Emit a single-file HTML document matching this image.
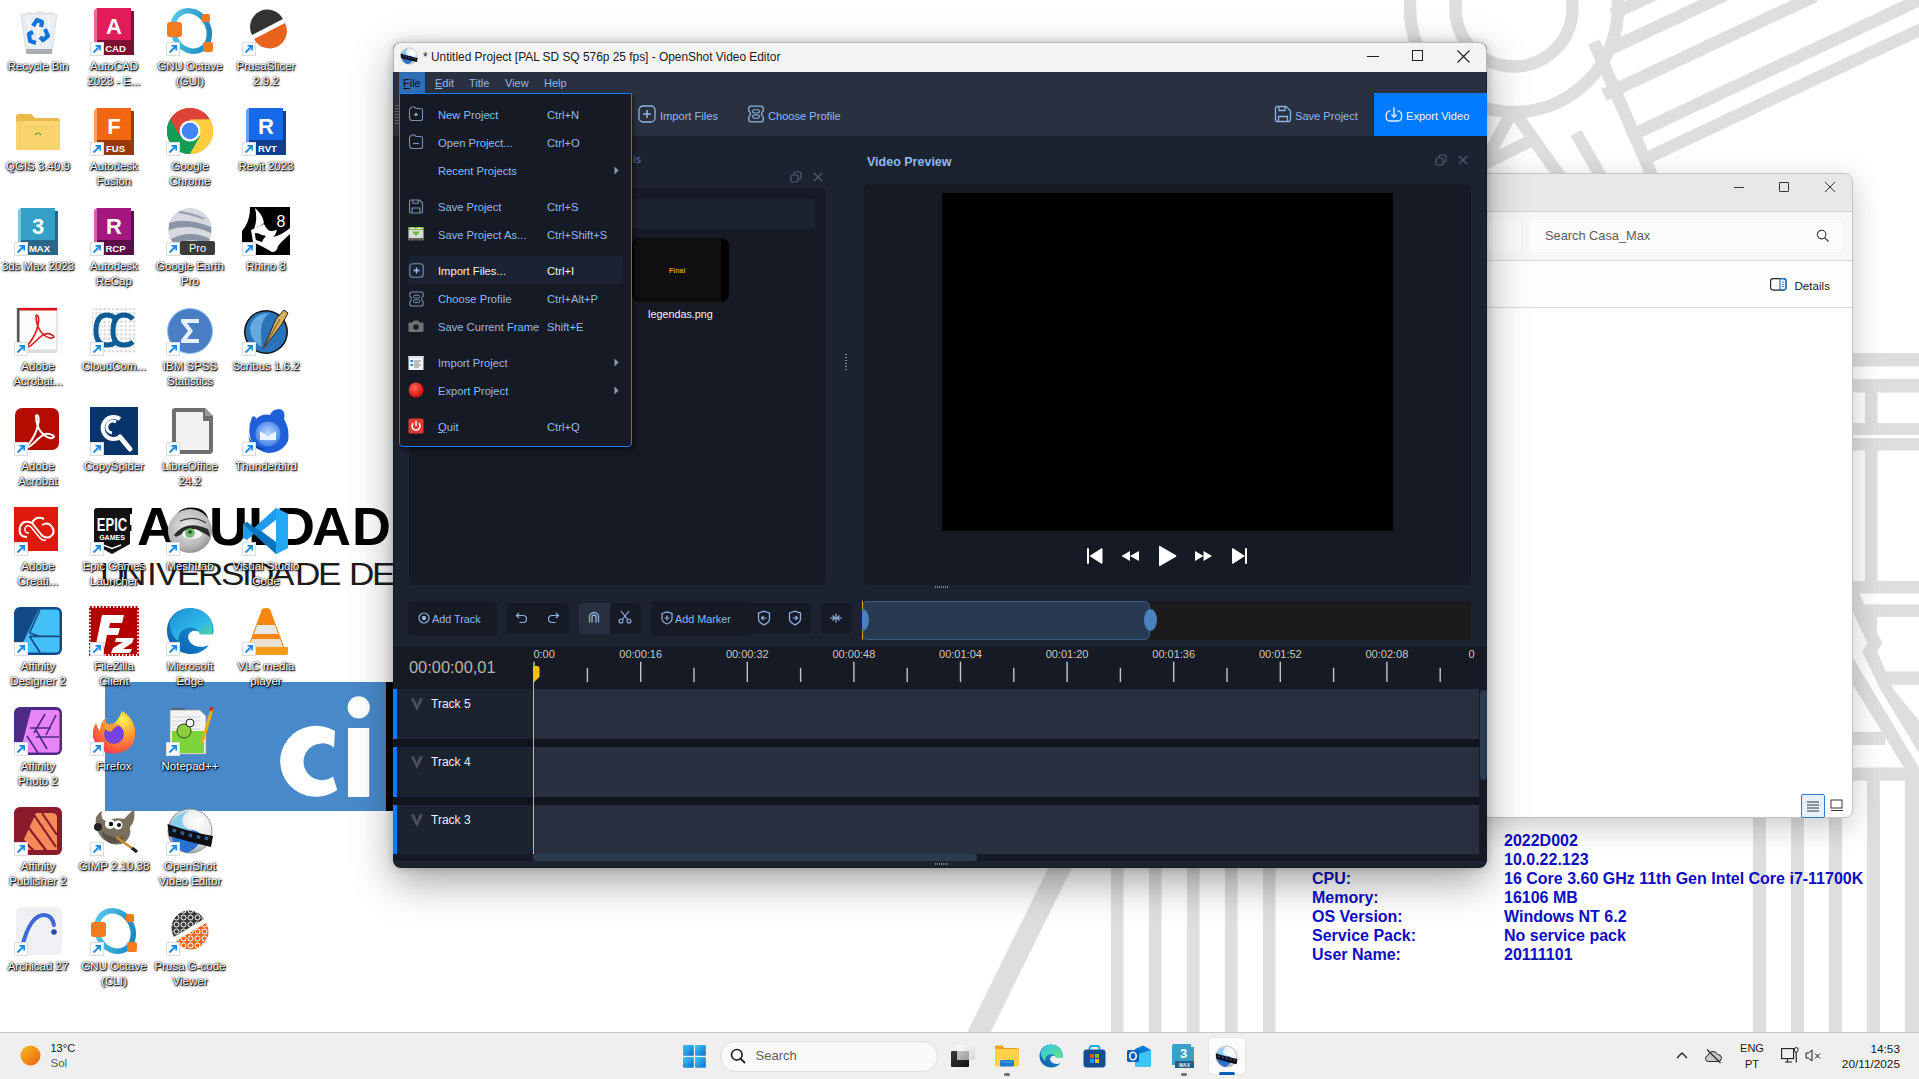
<!DOCTYPE html>
<html><head><meta charset="utf-8"><style>
*{box-sizing:border-box;margin:0;padding:0}
html,body{width:1919px;height:1079px;overflow:hidden;background:#fff;font-family:"Liberation Sans",sans-serif;position:relative}
.abs{position:absolute}
svg{overflow:visible}
.mtx{font-size:11px;line-height:14px;color:#8fb8ee;white-space:nowrap}
.tbt{font-size:11.1px;line-height:14px;color:#8fb8ee;white-space:nowrap}
.tbt2{font-size:10.8px;line-height:14px;color:#8fb8ee;white-space:nowrap}
.trh{left:397px;width:136px;height:50px;background:#1b2230}
.trc{left:533px;width:946px;height:50px;background:#283040}
.trb{left:393px;width:4px;height:50px;background:#0a7bff}
.trt{left:431px;font-size:12px;line-height:14px;color:#f0f0f0;white-space:nowrap}
.mt{left:438px;font-size:11.2px;line-height:14px;color:#8ebbf2;white-space:nowrap}
.mk{left:547px;font-size:11.2px;line-height:14px;color:#8ebbf2;white-space:nowrap}
.dl{width:80px;text-align:center;color:#fff;font-size:11.5px;line-height:15px;text-shadow:1px 1px 1px #000,0 0 2px #000,0 1px 3px rgba(0,0,0,.8)}
.bgi{font-size:16px;line-height:19px;font-weight:bold;color:#0c0cc4;white-space:nowrap}
.lb{top:496px;font-size:54px;line-height:60px;font-weight:bold;color:#000}
.lr{top:554.3px;font-size:32px;line-height:40px;color:#1c1c1c;transform:scaleX(1.1);transform-origin:0 0}

</style></head><body>
<svg class="abs" style="left:0;top:0" width="1919" height="1079">
<g fill="none" stroke="#dedede" stroke-width="12.5">
  <circle cx="1514" cy="8" r="58.5"/>
  <circle cx="1514" cy="8" r="104"/>
  <path d="M1612 14.3L1660 -8.3"/>
  <path d="M1612 48L1730 -7.4"/>
  <path d="M1604 95L1815 -4"/>
  <path d="M1628 136.8L1925 -2.8"/>
  <path d="M1643 159.8L1925 27.3"/>
  <path d="M1594 42L1656 185"/>
  <path d="M1576 133L1604 182"/>
  <path d="M1513 110L1478 175M1513 110L1566 185M1480 166L1536 138"/>
  <path d="M1064 860L977 1036" stroke-width="21"/>
</g>
<g fill="#dedede">
  <rect x="1111" y="868" width="12.5" height="164"/>
  <rect x="1149" y="868" width="12.5" height="164"/>
  <rect x="1187" y="868" width="12.5" height="164"/>
  <rect x="1225" y="868" width="12.5" height="164"/>
  <rect x="1263" y="868" width="12.5" height="164"/>
  <rect x="1753" y="818" width="13" height="214"/>
  <rect x="1791" y="818" width="13" height="214"/>
  <rect x="1829" y="818" width="13" height="214"/>
  <rect x="1867" y="780" width="13" height="252"/>
  <rect x="1905" y="780" width="14" height="252"/>
  <rect x="1853" y="353" width="66" height="13.5"/>
  <rect x="1853" y="379" width="66" height="13.5"/>
  <rect x="1865" y="392" width="12.5" height="32"/>
  <rect x="1853" y="423" width="66" height="12"/>
  <rect x="1853" y="438" width="66" height="12.5"/>
  <rect x="1865" y="450" width="12.5" height="132"/>
  <rect x="1853" y="581" width="66" height="12.5"/>
</g>
<g fill="#dedede">
  <rect x="1864" y="604.3" width="55" height="12.7"/>
  <rect x="1885" y="671.5" width="34" height="13.3"/>
  <rect x="1853" y="731.8" width="32" height="13.2"/>
  <rect x="1853" y="767.5" width="66" height="13.2"/>
  <path d="M1853 590L1859.7 594L1864 604L1877 617L1877 633L1882.6 643L1877 651.2L1893.8 690L1919 720.6L1919 753L1880.6 690L1862.2 651.2L1867.3 643L1853 612Z"/>
  <path d="M1853 657.8L1919 767.5L1919 792L1853 685Z"/>
</g>
</svg>
<!-- wallpaper logo -->
<div class="abs lb" style="left:101px">F</div><div class="abs lb" style="left:137px">A</div><div class="abs lb" style="left:171px">C</div><div class="abs lb" style="left:209px">U</div><div class="abs lb" style="left:248px">L</div><div class="abs lb" style="left:276px">D</div><div class="abs lb" style="left:312px">A</div><div class="abs lb" style="left:352px">D</div><div class="abs lb" style="left:391px">E</div>
<div class="abs lr" style="left:100px">U</div><div class="abs lr" style="left:121px">N</div><div class="abs lr" style="left:147px">I</div><div class="abs lr" style="left:156px">V</div><div class="abs lr" style="left:177.4px">E</div><div class="abs lr" style="left:198px">R</div><div class="abs lr" style="left:220.6px">S</div><div class="abs lr" style="left:242px">I</div><div class="abs lr" style="left:249px">D</div><div class="abs lr" style="left:271px">A</div><div class="abs lr" style="left:294.5px">D</div><div class="abs lr" style="left:318px">E</div><div class="abs lr" style="left:348.7px">D</div><div class="abs lr" style="left:371.6px">E</div>
<div class="abs" style="left:105px;top:682px;width:281px;height:129px;background:#4889c9"></div>
<div class="abs" style="left:385.5px;top:682px;width:7.5px;height:129px;background:#050505"></div>
<svg class="abs" style="left:0;top:0" width="400" height="820"><path d="M335 731A36 35.5 0 1 0 337.3 790L333 776.6A18.5 18.4 0 1 1 334 747.7Z" fill="#fff"/><rect x="348" y="728" width="21.2" height="69" fill="#fff"/><circle cx="358.7" cy="707.3" r="11.1" fill="#fff"/></svg>
<!-- BGInfo -->
<div class="abs bgi" style="left:1504px;top:830.5px">2022D002<br>10.0.22.123<br>16 Core 3.60 GHz 11th Gen Intel Core i7-11700K<br>16106 MB<br>Windows NT 6.2<br>No service pack<br>20111101</div>
<div class="abs bgi" style="left:1312px;top:868.5px">CPU:<br>Memory:<br>OS Version:<br>Service Pack:<br>User Name:</div>
<svg class="abs" style="left:14px;top:7px" width="48" height="48" viewBox="0 0 48 48"><path d="M7 7L12 44H38L43 7Z" fill="#e9eef2" stroke="#d0d6dc" stroke-width=".8"/><path d="M8 8Q14 3 20 6Q26 2 32 6Q38 3 42 8Z" fill="#dfe4e8"/><path d="M12 42H38V46Q38 47 37 47H13Q12 47 12 46Z" fill="#a9adb2"/><path d="M14 12L17 40M24 10V42M35 12L32 40" stroke="#fff" stroke-width="1.4" opacity=".9"/><path d="M19 19L23 13L28 15L27 20M31 22L34 29L29 33L26 30M22 36L16 34L15 27L19 25" fill="none" stroke="#1276d8" stroke-width="4.2" stroke-linejoin="round"/></svg>
<div class="abs dl" style="left:-2px;top:58.5px">Recycle Bin</div>
<svg class="abs" style="left:90px;top:7px" width="48" height="48" viewBox="0 0 48 48"><path d="M4 5Q4 2 7 1H38V48H4Z" fill="#e86c93"/><rect x="7" y="1" width="34" height="47" fill="#e01d5a"/><path d="M41 4H44V48H41Z" fill="#7d1230"/><rect x="7" y="33" width="37" height="15" fill="#7d1230"/><text x="24" y="27" font-size="22" font-weight="bold" fill="#fff" text-anchor="middle">A</text><text x="25.5" y="45" font-size="9.5" font-weight="bold" fill="#fff" text-anchor="middle">CAD</text><g transform="translate(0,35)"><rect x="0.5" y="0.5" width="13" height="13" fill="#fff" stroke="#d8dde4" stroke-width="1"/><path d="M3.5 10.5L10 4M5.5 3.8H10.2V8.5" fill="none" stroke="#1e88e5" stroke-width="1.8"/></g></svg>
<div class="abs dl" style="left:74px;top:58.5px">AutoCAD<br>2023 - E...</div>
<svg class="abs" style="left:166px;top:7px" width="48" height="48" viewBox="0 0 48 48"><defs><linearGradient id="octg" x1="0" y1="0" x2="1" y2="1"><stop offset="0" stop-color="#5fd0ee"/><stop offset="1" stop-color="#127fb8"/></linearGradient></defs><ellipse cx="25" cy="24" rx="17.5" ry="21" transform="rotate(-28 25 24)" fill="none" stroke="url(#octg)" stroke-width="5.5"/><rect x="1" y="15" width="15" height="15" rx="3" fill="#f47b20"/><rect x="36" y="7" width="8" height="8" rx="1.5" fill="#f47b20"/><rect x="37" y="35" width="10" height="10" rx="2" fill="#f47b20"/><g transform="translate(0,35)"><rect x="0.5" y="0.5" width="13" height="13" fill="#fff" stroke="#d8dde4" stroke-width="1"/><path d="M3.5 10.5L10 4M5.5 3.8H10.2V8.5" fill="none" stroke="#1e88e5" stroke-width="1.8"/></g></svg>
<div class="abs dl" style="left:150px;top:58.5px">GNU Octave<br>(GUI)</div>
<svg class="abs" style="left:242px;top:7px" width="48" height="48" viewBox="0 0 48 48"><path d="M10 28A16 16 0 0 1 41 12Z" fill="#333"/><path d="M12 32L43 16A16 16 0 0 1 12 32Z" fill="#e8641e"/><g transform="translate(0,35)"><rect x="0.5" y="0.5" width="13" height="13" fill="#fff" stroke="#d8dde4" stroke-width="1"/><path d="M3.5 10.5L10 4M5.5 3.8H10.2V8.5" fill="none" stroke="#1e88e5" stroke-width="1.8"/></g></svg>
<div class="abs dl" style="left:226px;top:58.5px">PrusaSlicer<br>2.9.2</div>
<svg class="abs" style="left:14px;top:107px" width="48" height="48" viewBox="0 0 48 48"><path d="M2 10Q2 7 5 7H17L21 11H43Q46 11 46 14V40Q46 43 43 43H5Q2 43 2 40Z" fill="#e9b949"/><rect x="2" y="14" width="44" height="29" rx="2.5" fill="#fad56b"/><path d="M6 14V43M10 20H40" stroke="#e0c070" stroke-width=".6"/><path d="M21 28q3-4 6 0" fill="none" stroke="#5a9a4a" stroke-width="1.2"/></svg>
<div class="abs dl" style="left:-2px;top:158.5px">QGIS 3.40.9</div>
<svg class="abs" style="left:90px;top:107px" width="48" height="48" viewBox="0 0 48 48"><path d="M4 5Q4 2 7 1H38V48H4Z" fill="#f9a060"/><rect x="7" y="1" width="34" height="47" fill="#f26711"/><path d="M41 4H44V48H41Z" fill="#9a3a0a"/><rect x="7" y="33" width="37" height="15" fill="#9a3a0a"/><text x="24" y="27" font-size="22" font-weight="bold" fill="#fff" text-anchor="middle">F</text><text x="25.5" y="45" font-size="9.5" font-weight="bold" fill="#fff" text-anchor="middle">FUS</text><g transform="translate(0,35)"><rect x="0.5" y="0.5" width="13" height="13" fill="#fff" stroke="#d8dde4" stroke-width="1"/><path d="M3.5 10.5L10 4M5.5 3.8H10.2V8.5" fill="none" stroke="#1e88e5" stroke-width="1.8"/></g></svg>
<div class="abs dl" style="left:74px;top:158.5px">Autodesk<br>Fusion</div>
<svg class="abs" style="left:166px;top:107px" width="48" height="48" viewBox="0 0 48 48"><circle cx="24" cy="24" r="23" fill="#db4437"/><path d="M24 24L4.1 12.5A23 23 0 0 0 24 47Z" fill="#0f9d58"/><path d="M24 24L24 47A23 23 0 0 0 43.9 12.5L24 12.5Z" fill="#ffcd40"/><path d="M24 12.5H43.9A23 23 0 0 0 4.1 12.5L14 29.5Z" fill="#db4437"/><path d="M24 24L14 29.5L4.1 12.5A23 23 0 0 0 24 47L34 29.5Z" fill="#0f9d58"/><path d="M34 29.5L24 47A23 23 0 0 0 43.9 12.5H24Z" fill="#ffcd40"/><circle cx="24" cy="24" r="10.5" fill="#fff"/><circle cx="24" cy="24" r="8.3" fill="#4285f4"/><g transform="translate(0,35)"><rect x="0.5" y="0.5" width="13" height="13" fill="#fff" stroke="#d8dde4" stroke-width="1"/><path d="M3.5 10.5L10 4M5.5 3.8H10.2V8.5" fill="none" stroke="#1e88e5" stroke-width="1.8"/></g></svg>
<div class="abs dl" style="left:150px;top:158.5px">Google<br>Chrome</div>
<svg class="abs" style="left:242px;top:107px" width="48" height="48" viewBox="0 0 48 48"><path d="M4 5Q4 2 7 1H38V48H4Z" fill="#6aa0f0"/><rect x="7" y="1" width="34" height="47" fill="#1769e8"/><path d="M41 4H44V48H41Z" fill="#0f3f8f"/><rect x="7" y="33" width="37" height="15" fill="#0f3f8f"/><text x="24" y="27" font-size="22" font-weight="bold" fill="#fff" text-anchor="middle">R</text><text x="25.5" y="45" font-size="9.5" font-weight="bold" fill="#fff" text-anchor="middle">RVT</text><g transform="translate(0,35)"><rect x="0.5" y="0.5" width="13" height="13" fill="#fff" stroke="#d8dde4" stroke-width="1"/><path d="M3.5 10.5L10 4M5.5 3.8H10.2V8.5" fill="none" stroke="#1e88e5" stroke-width="1.8"/></g></svg>
<div class="abs dl" style="left:226px;top:158.5px">Revit 2023</div>
<svg class="abs" style="left:14px;top:207px" width="48" height="48" viewBox="0 0 48 48"><path d="M4 5Q4 2 7 1H38V48H4Z" fill="#7cc4e0"/><rect x="7" y="1" width="34" height="47" fill="#34a0c8"/><path d="M41 4H44V48H41Z" fill="#2a6688"/><rect x="7" y="33" width="37" height="15" fill="#2a6688"/><text x="24" y="27" font-size="22" font-weight="bold" fill="#fff" text-anchor="middle">3</text><text x="25.5" y="45" font-size="9.5" font-weight="bold" fill="#fff" text-anchor="middle">MAX</text><g transform="translate(0,35)"><rect x="0.5" y="0.5" width="13" height="13" fill="#fff" stroke="#d8dde4" stroke-width="1"/><path d="M3.5 10.5L10 4M5.5 3.8H10.2V8.5" fill="none" stroke="#1e88e5" stroke-width="1.8"/></g></svg>
<div class="abs dl" style="left:-2px;top:258.5px">3ds Max 2023</div>
<svg class="abs" style="left:90px;top:207px" width="48" height="48" viewBox="0 0 48 48"><path d="M4 5Q4 2 7 1H38V48H4Z" fill="#d060b0"/><rect x="7" y="1" width="34" height="47" fill="#a3177e"/><path d="M41 4H44V48H41Z" fill="#5c0e48"/><rect x="7" y="33" width="37" height="15" fill="#5c0e48"/><text x="24" y="27" font-size="22" font-weight="bold" fill="#fff" text-anchor="middle">R</text><text x="25.5" y="45" font-size="9.5" font-weight="bold" fill="#fff" text-anchor="middle">RCP</text><g transform="translate(0,35)"><rect x="0.5" y="0.5" width="13" height="13" fill="#fff" stroke="#d8dde4" stroke-width="1"/><path d="M3.5 10.5L10 4M5.5 3.8H10.2V8.5" fill="none" stroke="#1e88e5" stroke-width="1.8"/></g></svg>
<div class="abs dl" style="left:74px;top:258.5px">Autodesk<br>ReCap</div>
<svg class="abs" style="left:166px;top:207px" width="48" height="48" viewBox="0 0 48 48"><circle cx="24" cy="23" r="22" fill="#d8d9de"/><path d="M3 16Q20 10 45 20L45 26Q22 16 3 23Z" fill="#8a93a8"/><path d="M5 32Q25 22 44 32L42 37Q25 29 8 38Z" fill="#8a93a8"/><path d="M14 4Q30 6 40 12L36 12Q26 8 12 6Z" fill="#9aa2b4"/><rect x="14" y="34" width="35" height="14" rx="2" fill="#3b3b3b"/><text x="31.5" y="45" font-size="11" fill="#fff" text-anchor="middle">Pro</text><g transform="translate(0,35)"><rect x="0.5" y="0.5" width="13" height="13" fill="#fff" stroke="#d8dde4" stroke-width="1"/><path d="M3.5 10.5L10 4M5.5 3.8H10.2V8.5" fill="none" stroke="#1e88e5" stroke-width="1.8"/></g></svg>
<div class="abs dl" style="left:150px;top:258.5px">Google Earth<br>Pro</div>
<svg class="abs" style="left:242px;top:207px" width="48" height="48" viewBox="0 0 48 48"><rect x="0" y="0" width="48" height="48" fill="#000"/><path d="M0 0H8Q8 12 3 20L0 24Z" fill="#fff"/><path d="M13 1Q21 8 22 16L18 19L12 22Q16 12 13 1Z" fill="#fff"/><path d="M9 23L18 19L22 17Q26 25 30 24L35 23Q33 29 31 30Q40 28 48 21V27Q40 34 36 39Q35 45 30 45Q22 40 11 35Q10 29 9 23Z" fill="#fff"/><path d="M13 26Q17 26 20 28L24 29Q21 32 20 35L14 33Q13 30 13 26Z" fill="#000"/><path d="M0 24Q8 28 11 35L0 35Z" fill="#000"/><text x="39" y="20" font-size="16" fill="#fff" text-anchor="middle">8</text><g transform="translate(0,35)"><rect x="0.5" y="0.5" width="13" height="13" fill="#fff" stroke="#d8dde4" stroke-width="1"/><path d="M3.5 10.5L10 4M5.5 3.8H10.2V8.5" fill="none" stroke="#1e88e5" stroke-width="1.8"/></g></svg>
<div class="abs dl" style="left:226px;top:258.5px">Rhino 8</div>
<svg class="abs" style="left:14px;top:307px" width="48" height="48" viewBox="0 0 48 48"><rect x="3" y="1" width="40" height="42" fill="#fbfbfb" stroke="#d0d0d0"/><rect x="3" y="1" width="40" height="2.5" fill="#d11"/><rect x="3" y="1" width="2.5" height="42" fill="#555"/><path d="M22 8q4 0 2 10t-10 20q-2 2 0 2t10-8 14-4q4 2 0 3t-10-5-6-18" fill="none" stroke="#d42020" stroke-width="1.6"/><rect x="3" y="43" width="40" height="3" fill="#ddd"/><g transform="translate(0,35)"><rect x="0.5" y="0.5" width="13" height="13" fill="#fff" stroke="#d8dde4" stroke-width="1"/><path d="M3.5 10.5L10 4M5.5 3.8H10.2V8.5" fill="none" stroke="#1e88e5" stroke-width="1.8"/></g></svg>
<div class="abs dl" style="left:-2px;top:358.5px">Adobe<br>Acrobat...</div>
<svg class="abs" style="left:90px;top:307px" width="48" height="48" viewBox="0 0 48 48"><pattern id="dots" width="4.2" height="4.2" patternUnits="userSpaceOnUse"><circle cx="2.1" cy="2.1" r="1.3" fill="#d6d6d6"/></pattern><rect x="2" y="1" width="45" height="46" fill="url(#dots)"/><path d="M26 12Q22 8 17 8Q6 8 6 24Q6 38 17 38Q22 38 26 35" fill="none" stroke="#0c5d96" stroke-width="5"/><path d="M43 12Q39 8 34 8Q23 8 23 24Q23 38 34 38Q39 38 43 35" fill="none" stroke="#0c5d96" stroke-width="5"/><g transform="translate(0,35)"><rect x="0.5" y="0.5" width="13" height="13" fill="#fff" stroke="#d8dde4" stroke-width="1"/><path d="M3.5 10.5L10 4M5.5 3.8H10.2V8.5" fill="none" stroke="#1e88e5" stroke-width="1.8"/></g></svg>
<div class="abs dl" style="left:74px;top:358.5px">CloudCom...</div>
<svg class="abs" style="left:166px;top:307px" width="48" height="48" viewBox="0 0 48 48"><circle cx="24" cy="24" r="22.5" fill="#4a7ec4" stroke="#8ec0f0" stroke-width="1"/><path d="M15 12H33V16H21L27 24L21 32H33V36H15V33L22 24L15 15Z" fill="#e8f2ff"/><g transform="translate(0,35)"><rect x="0.5" y="0.5" width="13" height="13" fill="#fff" stroke="#d8dde4" stroke-width="1"/><path d="M3.5 10.5L10 4M5.5 3.8H10.2V8.5" fill="none" stroke="#1e88e5" stroke-width="1.8"/></g></svg>
<div class="abs dl" style="left:150px;top:358.5px">IBM SPSS<br>Statistics</div>
<svg class="abs" style="left:242px;top:307px" width="48" height="48" viewBox="0 0 48 48"><circle cx="24" cy="25" r="22" fill="#111"/><circle cx="24" cy="25" r="20.5" fill="#2b73b8"/><path d="M8 20Q12 6 28 6Q16 12 20 40Q8 34 8 20Z" fill="#7ec0f0" opacity=".7"/><path d="M21 42L34 12L42 3L46 6L40 17Z" fill="#d8b060" stroke="#222" stroke-width="1"/><path d="M21 42L38 12" stroke="#6a5020" stroke-width="1"/><g transform="translate(0,35)"><rect x="0.5" y="0.5" width="13" height="13" fill="#fff" stroke="#d8dde4" stroke-width="1"/><path d="M3.5 10.5L10 4M5.5 3.8H10.2V8.5" fill="none" stroke="#1e88e5" stroke-width="1.8"/></g></svg>
<div class="abs dl" style="left:226px;top:358.5px">Scribus 1.6.2</div>
<svg class="abs" style="left:14px;top:407px" width="48" height="48" viewBox="0 0 48 48"><rect x="1" y="1" width="44" height="42" rx="7" fill="#b30b00"/><path d="M22 8q4 0 2 10t-10 20q-2 2 0 2t10-8 14-4q4 2 0 3t-10-5-6-18" fill="none" stroke="#fff" stroke-width="2"/><g transform="translate(0,35)"><rect x="0.5" y="0.5" width="13" height="13" fill="#fff" stroke="#d8dde4" stroke-width="1"/><path d="M3.5 10.5L10 4M5.5 3.8H10.2V8.5" fill="none" stroke="#1e88e5" stroke-width="1.8"/></g></svg>
<div class="abs dl" style="left:-2px;top:458.5px">Adobe<br>Acrobat</div>
<svg class="abs" style="left:90px;top:407px" width="48" height="48" viewBox="0 0 48 48"><rect x="0" y="0" width="48" height="48" fill="#07356a"/><path d="M30 12A11 11 0 1 0 30 30" fill="none" stroke="#fff" stroke-width="4"/><path d="M26 15A6 6 0 1 0 22 26" fill="none" stroke="#fff" stroke-width="3"/><path d="M30 30L40 42" stroke="#fff" stroke-width="5" stroke-linecap="round"/><g transform="translate(0,35)"><rect x="0.5" y="0.5" width="13" height="13" fill="#fff" stroke="#d8dde4" stroke-width="1"/><path d="M3.5 10.5L10 4M5.5 3.8H10.2V8.5" fill="none" stroke="#1e88e5" stroke-width="1.8"/></g></svg>
<div class="abs dl" style="left:74px;top:458.5px">CopySpider</div>
<svg class="abs" style="left:166px;top:407px" width="48" height="48" viewBox="0 0 48 48"><path d="M6 4Q6 1 9 1H39L47 9V43Q47 47 43 47H10Q6 47 6 43Z" fill="#6f6f6f"/><path d="M10 5H37V13Q37 14 38 14H43V43H10Z" fill="#f2f2f2"/><path d="M39 1L47 9H39Z" fill="#9a9a9a"/><g transform="translate(0,35)"><rect x="0.5" y="0.5" width="13" height="13" fill="#fff" stroke="#d8dde4" stroke-width="1"/><path d="M3.5 10.5L10 4M5.5 3.8H10.2V8.5" fill="none" stroke="#1e88e5" stroke-width="1.8"/></g></svg>
<div class="abs dl" style="left:150px;top:458.5px">LibreOffice<br>24.2</div>
<svg class="abs" style="left:242px;top:407px" width="48" height="48" viewBox="0 0 48 48"><defs><radialGradient id="tbg" cx=".5" cy=".45" r=".6"><stop offset="0" stop-color="#b8d8ff"/><stop offset="1" stop-color="#3a7ae8"/></radialGradient></defs><path d="M10 10Q6 20 8 30Q12 44 26 46Q40 46 46 34Q48 22 42 12Q44 4 38 2Q30 2 28 8Q20 6 14 12Q14 8 10 10Z" fill="#1f5fd8"/><circle cx="26" cy="27" r="12.5" fill="url(#tbg)"/><path d="M18 24L26 29L34 24V33H18Z" fill="#eaf3ff"/><path d="M6 28Q10 40 24 42Q14 44 8 36Z" fill="#0f3fa8"/><g transform="translate(0,35)"><rect x="0.5" y="0.5" width="13" height="13" fill="#fff" stroke="#d8dde4" stroke-width="1"/><path d="M3.5 10.5L10 4M5.5 3.8H10.2V8.5" fill="none" stroke="#1e88e5" stroke-width="1.8"/></g></svg>
<div class="abs dl" style="left:226px;top:458.5px">Thunderbird</div>
<svg class="abs" style="left:14px;top:507px" width="48" height="48" viewBox="0 0 48 48"><rect x="0" y="0" width="44" height="44" fill="#e0190e"/><path d="M13 30Q4 30 6 20Q9 12 18 16L26 26Q30 32 36 30Q42 26 38 20Q34 14 28 18M18 16Q22 8 30 12" fill="none" stroke="#fff" stroke-width="2"/><path d="M15 26Q10 26 11 21Q13 17 17 20L25 30Q28 34 32 33" fill="none" stroke="#fff" stroke-width="1.5"/><g transform="translate(0,35)"><rect x="0.5" y="0.5" width="13" height="13" fill="#fff" stroke="#d8dde4" stroke-width="1"/><path d="M3.5 10.5L10 4M5.5 3.8H10.2V8.5" fill="none" stroke="#1e88e5" stroke-width="1.8"/></g></svg>
<div class="abs dl" style="left:-2px;top:558.5px">Adobe<br>Creati...</div>
<svg class="abs" style="left:90px;top:507px" width="48" height="48" viewBox="0 0 48 48"><path d="M4 4Q4 1 7 1H37Q40 1 40 4V37L22 47L4 37Z" fill="#121212"/><text x="22" y="23" font-size="13" font-weight="bold" fill="#fff" text-anchor="middle" transform="translate(0,-9) scale(1,1.45)">EPIC</text><text x="22" y="33" font-size="7" font-weight="bold" fill="#fff" text-anchor="middle">GAMES</text><path d="M13 38L22 41.5L31 38" fill="none" stroke="#fff" stroke-width="1.4"/><g transform="translate(0,35)"><rect x="0.5" y="0.5" width="13" height="13" fill="#fff" stroke="#d8dde4" stroke-width="1"/><path d="M3.5 10.5L10 4M5.5 3.8H10.2V8.5" fill="none" stroke="#1e88e5" stroke-width="1.8"/></g></svg>
<div class="abs dl" style="left:74px;top:558.5px">Epic Games<br>Launcher</div>
<svg class="abs" style="left:166px;top:507px" width="48" height="48" viewBox="0 0 48 48"><defs><radialGradient id="mlg" cx=".45" cy=".4" r=".65"><stop offset="0" stop-color="#e8e8e8"/><stop offset=".7" stop-color="#b8b8b8"/><stop offset="1" stop-color="#8a8a8a"/></radialGradient></defs><circle cx="24" cy="24" r="22" fill="url(#mlg)"/><path d="M8 28Q20 12 42 22Q44 26 44 30Q30 18 10 30Z" fill="#2a2a2a"/><path d="M14 14Q28 8 40 16" fill="none" stroke="#333" stroke-width="1.2"/><ellipse cx="26" cy="27" rx="10" ry="5" fill="#f2f2f2"/><circle cx="24" cy="26" r="4.8" fill="#6fb86f"/><circle cx="24" cy="25" r="1.8" fill="#1e4a1e"/><g transform="translate(0,35)"><rect x="0.5" y="0.5" width="13" height="13" fill="#fff" stroke="#d8dde4" stroke-width="1"/><path d="M3.5 10.5L10 4M5.5 3.8H10.2V8.5" fill="none" stroke="#1e88e5" stroke-width="1.8"/></g></svg>
<div class="abs dl" style="left:150px;top:558.5px">MeshLab</div>
<svg class="abs" style="left:242px;top:507px" width="48" height="48" viewBox="0 0 48 48"><path d="M34 1L46 7V41L34 47L12 27L5 33L1 31V17L5 15L12 21Z" fill="#1f9cf0"/><path d="M34 13L20 24L34 35Z" fill="#fff"/><path d="M34 1L46 7V41L34 47Z" fill="#24a8f5"/><path d="M34 13V35L20 24Z" fill="#fff"/><path d="M1 17L5 15L34 35V47Z" fill="#0065a9" opacity=".7"/><g transform="translate(0,35)"><rect x="0.5" y="0.5" width="13" height="13" fill="#fff" stroke="#d8dde4" stroke-width="1"/><path d="M3.5 10.5L10 4M5.5 3.8H10.2V8.5" fill="none" stroke="#1e88e5" stroke-width="1.8"/></g></svg>
<div class="abs dl" style="left:226px;top:558.5px">Visual Studio<br>Code</div>
<svg class="abs" style="left:14px;top:607px" width="48" height="48" viewBox="0 0 48 48"><rect x="0" y="0" width="48" height="48" rx="6" fill="#124a88"/><path d="M24.5 2.5H42Q45.5 2.5 45.5 6V42Q45.5 45.5 42 45.5H4.5Z" fill="#45c0f6"/><path d="M15.5 29.3H45.5M15.5 26L25.5 29.3M15.5 29.3L26 45.5M15.5 26L26 2.5" fill="none" stroke="#124a88" stroke-width="1.7"/><g transform="translate(0,35)"><rect x="0.5" y="0.5" width="13" height="13" fill="#fff" stroke="#d8dde4" stroke-width="1"/><path d="M3.5 10.5L10 4M5.5 3.8H10.2V8.5" fill="none" stroke="#1e88e5" stroke-width="1.8"/></g></svg>
<div class="abs dl" style="left:-2px;top:658.5px">Affinity<br>Designer 2</div>
<svg class="abs" style="left:90px;top:607px" width="48" height="48" viewBox="0 0 48 48"><rect x="1" y="1" width="46" height="46" fill="#b40000"/><rect x="0" y="0" width="48" height="48" fill="none" stroke="#b40000" stroke-width="2" stroke-dasharray="2 1.5"/><path d="M12 8H34L32 16H20L19 21H30L28 28H17L14 42H5Z" fill="#fff"/><path d="M26 31H44L42 36L33 42H42L40 46H21L23 41L33 35H25Z" fill="#fff"/><g transform="translate(0,35)"><rect x="0.5" y="0.5" width="13" height="13" fill="#fff" stroke="#d8dde4" stroke-width="1"/><path d="M3.5 10.5L10 4M5.5 3.8H10.2V8.5" fill="none" stroke="#1e88e5" stroke-width="1.8"/></g></svg>
<div class="abs dl" style="left:74px;top:658.5px">FileZilla<br>Client</div>
<svg class="abs" style="left:166px;top:607px" width="48" height="48" viewBox="0 0 48 48"><defs><linearGradient id="ed1" x1="0" y1="1" x2="1" y2="0"><stop offset="0" stop-color="#0c59a4"/><stop offset="1" stop-color="#1ea3e6"/></linearGradient><linearGradient id="ed2" x1="0" y1="0" x2="1" y2="1"><stop offset="0" stop-color="#1c8fd8"/><stop offset=".6" stop-color="#2fb8e8"/><stop offset="1" stop-color="#5fe07a"/></linearGradient></defs><g transform="scale(2)"><path d="M12 0.5C5 0.5 .5 6 .5 12c0 7 6 11.5 12 11.5 3.5 0 7-1.7 9-4.5-3 1.5-7.5 1.2-9.5-1.5-1.5-2-1-4 .5-5 1.3-1 3.5-.8 4.5.5l.3.6h6.2c.2-.7.3-1.5.3-2.3C23.5 5 18.5.5 12 .5z" fill="url(#ed1)"/><path d="M2 7.5C4 3 8 .8 12 .8c6.5 0 11.3 4.5 11.3 10.5 0 .8-.1 1.6-.3 2.3h-6.2c-.5-2.5-3.5-4-6.5-3-3 1-4.5 4-4 6.5C3.2 15 1.5 11 2 7.5z" fill="url(#ed2)"/></g><g transform="translate(0,35)"><rect x="0.5" y="0.5" width="13" height="13" fill="#fff" stroke="#d8dde4" stroke-width="1"/><path d="M3.5 10.5L10 4M5.5 3.8H10.2V8.5" fill="none" stroke="#1e88e5" stroke-width="1.8"/></g></svg>
<div class="abs dl" style="left:150px;top:658.5px">Microsoft<br>Edge</div>
<svg class="abs" style="left:242px;top:607px" width="48" height="48" viewBox="0 0 48 48"><path d="M20 2Q24 0 28 2L42 40H6Z" fill="#f7870f"/><path d="M15 18H33L36 27H12Z" fill="#e8e8e8"/><path d="M10 32H38L41 40H7Z" fill="#e8e8e8" opacity=".9"/><path d="M2 40H46L46 46Q46 48 44 48H4Q2 48 2 46Z" fill="#f39c1a"/><g transform="translate(0,35)"><rect x="0.5" y="0.5" width="13" height="13" fill="#fff" stroke="#d8dde4" stroke-width="1"/><path d="M3.5 10.5L10 4M5.5 3.8H10.2V8.5" fill="none" stroke="#1e88e5" stroke-width="1.8"/></g></svg>
<div class="abs dl" style="left:226px;top:658.5px">VLC media<br>player</div>
<svg class="abs" style="left:14px;top:707px" width="48" height="48" viewBox="0 0 48 48"><rect x="0" y="0" width="48" height="48" rx="6" fill="#4c2a86"/><path d="M17 3H42Q45.5 3 45.5 6.5V42Q45.5 45.5 42 45.5H6Z" fill="#e884f7"/><path d="M31 7L20 26M37 21H16M42 8L32 28M22 23L33 42M13 29L24 46M22 30H45" fill="none" stroke="#4c2a86" stroke-width="1.6"/><g transform="translate(0,35)"><rect x="0.5" y="0.5" width="13" height="13" fill="#fff" stroke="#d8dde4" stroke-width="1"/><path d="M3.5 10.5L10 4M5.5 3.8H10.2V8.5" fill="none" stroke="#1e88e5" stroke-width="1.8"/></g></svg>
<div class="abs dl" style="left:-2px;top:758.5px">Affinity<br>Photo 2</div>
<svg class="abs" style="left:90px;top:707px" width="48" height="48" viewBox="0 0 48 48"><defs><radialGradient id="ffg" cx=".7" cy=".2" r=".9"><stop offset="0" stop-color="#fff44f"/><stop offset=".4" stop-color="#ffa436"/><stop offset=".8" stop-color="#ff5b3a"/><stop offset="1" stop-color="#e32b6c"/></radialGradient></defs><path d="M44 18Q48 34 38 42Q28 48 18 46Q6 42 3 30Q2 22 6 16Q8 22 10 24Q10 16 16 10Q14 18 22 18Q28 14 32 4Q40 8 44 18Z" fill="url(#ffg)"/><circle cx="24" cy="27" r="10" fill="#7542e5"/><path d="M14 20Q20 14 30 18Q24 20 22 24Q18 26 14 20Z" fill="#ff9a3c"/><g transform="translate(0,35)"><rect x="0.5" y="0.5" width="13" height="13" fill="#fff" stroke="#d8dde4" stroke-width="1"/><path d="M3.5 10.5L10 4M5.5 3.8H10.2V8.5" fill="none" stroke="#1e88e5" stroke-width="1.8"/></g></svg>
<div class="abs dl" style="left:74px;top:758.5px">Firefox</div>
<svg class="abs" style="left:166px;top:707px" width="48" height="48" viewBox="0 0 48 48"><path d="M4 3H34L40 9V47H4Z" fill="#f4f4f4" stroke="#999" stroke-width=".8"/><path d="M5 3l1-2 1 2 1-2 1 2 1-2 1 2 1-2 1 2 1-2 1 2 1-2 1 2 1-2 1 2" fill="none" stroke="#555" stroke-width=".7"/><path d="M6 24H38V46H6Z" fill="#7ed23a"/><path d="M6 10H34M6 14H34M6 18H34M6 22H34" stroke="#b8c8d8" stroke-width=".7"/><circle cx="18" cy="24" r="7" fill="#8cd040" stroke="#2a4a10" stroke-width="1"/><circle cx="24" cy="16" r="4" fill="#fff" stroke="#222" stroke-width="1"/><path d="M36 36L46 2" stroke="#e8b010" stroke-width="3"/><path d="M44.5 4L46 0" stroke="#c03030" stroke-width="3"/><g transform="translate(0,35)"><rect x="0.5" y="0.5" width="13" height="13" fill="#fff" stroke="#d8dde4" stroke-width="1"/><path d="M3.5 10.5L10 4M5.5 3.8H10.2V8.5" fill="none" stroke="#1e88e5" stroke-width="1.8"/></g></svg>
<div class="abs dl" style="left:150px;top:758.5px">Notepad++</div>
<svg class="abs" style="left:14px;top:807px" width="48" height="48" viewBox="0 0 48 48"><rect x="0" y="0" width="48" height="48" rx="6" fill="#8a1b2a"/><path d="M5 43L22 6H38Q43 6 43 11V43Z" fill="#f58b5a"/><path d="M20 8L42 40M14 20L34 46M8 32L22 46M28 6L43 28" stroke="#8a1b2a" stroke-width="2.2"/><g transform="translate(0,35)"><rect x="0.5" y="0.5" width="13" height="13" fill="#fff" stroke="#d8dde4" stroke-width="1"/><path d="M3.5 10.5L10 4M5.5 3.8H10.2V8.5" fill="none" stroke="#1e88e5" stroke-width="1.8"/></g></svg>
<div class="abs dl" style="left:-2px;top:858.5px">Affinity<br>Publisher 2</div>
<svg class="abs" style="left:90px;top:807px" width="48" height="48" viewBox="0 0 48 48"><path d="M6 18Q4 8 12 4Q10 12 16 14Q24 10 34 12Q40 6 44 2Q46 14 40 20Q42 30 34 36Q24 40 16 34Q8 30 6 18Z" fill="#7a7060"/><path d="M12 24Q20 32 34 30Q30 38 20 36Q12 32 12 24Z" fill="#5a5248"/><circle cx="8" cy="20" r="4" fill="#222"/><circle cx="20" cy="17" r="5" fill="#fff"/><circle cx="28" cy="18" r="4.5" fill="#fff"/><circle cx="21" cy="17" r="2.2" fill="#111"/><circle cx="29" cy="18" r="2" fill="#111"/><path d="M26 30L46 44" stroke="#c88a30" stroke-width="2.5"/><path d="M42 41L47 45" stroke="#222" stroke-width="3.5"/><g transform="translate(0,35)"><rect x="0.5" y="0.5" width="13" height="13" fill="#fff" stroke="#d8dde4" stroke-width="1"/><path d="M3.5 10.5L10 4M5.5 3.8H10.2V8.5" fill="none" stroke="#1e88e5" stroke-width="1.8"/></g></svg>
<div class="abs dl" style="left:74px;top:858.5px">GIMP 2.10.38</div>
<svg class="abs" style="left:166px;top:807px" width="48" height="48" viewBox="0 0 48 48"><defs><radialGradient id="osd" cx="0.68" cy="0.3" r="0.8"><stop offset="0" stop-color="#ffffff"/><stop offset=".55" stop-color="#e2e5e8"/><stop offset="1" stop-color="#8c939a"/></radialGradient></defs><circle cx="24" cy="24" r="22" fill="url(#osd)" stroke="#7a7f85" stroke-width="0.8"/><path d="M4 21Q7 7 23 3.5Q14 10 17 17Q19 21.5 27 23L5 27Z" fill="#86cdf2"/><path d="M5 27L27 23Q38 26 35 34Q31 41 21 46Q11 43 7 35Z" fill="#2c6fd2"/><path d="M1.5 17Q24 25 47 29L45 40Q24 35 3 29Z" fill="#0e0e10"/><path d="M7 21.5l3.5 1-.8 3.2-3.5-1zM15 24l3.5 1-.8 3.2-3.5-1zM23 26.3l3.5.9-.7 3.2-3.5-.9zM31 28l3.5.8-.6 3.2-3.5-.8zM39 29.4l3.5.7-.5 3.2-3.5-.7z" fill="#2d5f9e"/><g transform="translate(0,35)"><rect x="0.5" y="0.5" width="13" height="13" fill="#fff" stroke="#d8dde4" stroke-width="1"/><path d="M3.5 10.5L10 4M5.5 3.8H10.2V8.5" fill="none" stroke="#1e88e5" stroke-width="1.8"/></g></svg>
<div class="abs dl" style="left:150px;top:858.5px">OpenShot<br>Video Editor</div>
<svg class="abs" style="left:14px;top:907px" width="48" height="48" viewBox="0 0 48 48"><rect x="2" y="0" width="46" height="48" rx="6" fill="#eef0f4"/><path d="M8 40Q16 8 30 8Q38 8 40 18" fill="none" stroke="#3e6ad8" stroke-width="4" stroke-linecap="round"/><circle cx="40" cy="25" r="2.8" fill="#2a4ab0"/><g transform="translate(0,35)"><rect x="0.5" y="0.5" width="13" height="13" fill="#fff" stroke="#d8dde4" stroke-width="1"/><path d="M3.5 10.5L10 4M5.5 3.8H10.2V8.5" fill="none" stroke="#1e88e5" stroke-width="1.8"/></g></svg>
<div class="abs dl" style="left:-2px;top:958.5px">Archicad 27</div>
<svg class="abs" style="left:90px;top:907px" width="48" height="48" viewBox="0 0 48 48"><defs><linearGradient id="octg" x1="0" y1="0" x2="1" y2="1"><stop offset="0" stop-color="#5fd0ee"/><stop offset="1" stop-color="#127fb8"/></linearGradient></defs><ellipse cx="25" cy="24" rx="17.5" ry="21" transform="rotate(-28 25 24)" fill="none" stroke="url(#octg)" stroke-width="5.5"/><rect x="1" y="15" width="15" height="15" rx="3" fill="#f47b20"/><rect x="36" y="7" width="8" height="8" rx="1.5" fill="#f47b20"/><rect x="37" y="35" width="10" height="10" rx="2" fill="#f47b20"/><g transform="translate(0,35)"><rect x="0.5" y="0.5" width="13" height="13" fill="#fff" stroke="#d8dde4" stroke-width="1"/><path d="M3.5 10.5L10 4M5.5 3.8H10.2V8.5" fill="none" stroke="#1e88e5" stroke-width="1.8"/></g></svg>
<div class="abs dl" style="left:74px;top:958.5px">GNU Octave<br>(CLI)</div>
<svg class="abs" style="left:166px;top:907px" width="48" height="48" viewBox="0 0 48 48"><pattern id="hex" width="7" height="7" patternUnits="userSpaceOnUse"><circle cx="3.5" cy="3.5" r="2.5" fill="none" stroke="#fff" stroke-width="1"/></pattern><path d="M8 30A16 16 0 0 1 38 12Z" fill="#3a3a3a"/><path d="M8 30A16 16 0 0 1 38 12Z" fill="url(#hex)"/><path d="M10 34L40 16A16 16 0 0 1 10 34Z" fill="#ee6a22"/><path d="M10 34L40 16A16 16 0 0 1 10 34Z" fill="url(#hex)"/><g transform="translate(0,35)"><rect x="0.5" y="0.5" width="13" height="13" fill="#fff" stroke="#d8dde4" stroke-width="1"/><path d="M3.5 10.5L10 4M5.5 3.8H10.2V8.5" fill="none" stroke="#1e88e5" stroke-width="1.8"/></g></svg>
<div class="abs dl" style="left:150px;top:958.5px">Prusa G-code<br>Viewer</div><div class="abs" style="left:1300px;top:173px;width:553px;height:645px;border-radius:8px;box-shadow:0 8px 30px rgba(0,0,0,.22);background:#fff;overflow:hidden;border:1px solid #c4c4c4">
  <div class="abs" style="left:0;top:0;width:553px;height:38px;background:#e8e8e8;border-bottom:1px solid #d2d2d2"></div>
  <div class="abs" style="left:0;top:38px;width:553px;height:49px;background:#f7f7f7;border-bottom:1px solid #d8d8d8"></div>
  <div class="abs" style="left:0;top:87px;width:553px;height:47px;background:#fdfdfd;border-bottom:1px solid #d8d8d8"></div>
</div>
<div class="abs" style="left:1440px;top:220px;width:81px;height:32px;background:#fbfbfb;border-radius:4px"></div>
<div class="abs" style="left:1530px;top:220px;width:312px;height:32px;background:#fcfcfc;border-radius:4px"></div>
<div class="abs" style="left:1545px;top:228px;font-size:12.8px;line-height:16px;color:#5c5c5c;white-space:nowrap">Search Casa_Max</div>
<svg class="abs" style="left:1816px;top:229px" width="14" height="14"><circle cx="5.6" cy="5.6" r="4.3" fill="none" stroke="#333" stroke-width="1.1"/><path d="M8.8 8.8L12.5 12.5" stroke="#333" stroke-width="1.2"/></svg>
<div class="abs" style="left:1734px;top:187px;width:10px;height:1px;background:#333"></div>
<div class="abs" style="left:1779px;top:182px;width:10px;height:10px;border:1px solid #333;border-radius:1px"></div>
<svg class="abs" style="left:1825px;top:182px" width="10" height="10"><path d="M0 0L10 10M10 0L0 10" stroke="#333" stroke-width="1"/></svg>
<svg class="abs" style="left:1770px;top:278px" width="17" height="13"><rect x="0.6" y="0.6" width="15.5" height="11.5" rx="2.5" fill="none" stroke="#222" stroke-width="1.1"/><path d="M10 0.6V12.1" stroke="#1a72d0" stroke-width="1.2"/><path d="M10 .6h3.5a2.5 2.5 0 0 1 2.5 2.5v6.5a2.5 2.5 0 0 1-2.5 2.5H10" fill="none" stroke="#1a72d0" stroke-width="1.1"/><path d="M11.8 4h2.5M11.8 6.3h2.5M11.8 8.6h2.5" stroke="#1a72d0" stroke-width=".9"/></svg>
<div class="abs" style="left:1794.5px;top:279px;font-size:11.6px;line-height:14px;color:#1a1a1a">Details</div>
<div class="abs" style="left:1801px;top:794px;width:24px;height:24px;background:#e5f1fb;border:1px solid #2a7fd4;border-radius:2px"></div>
<svg class="abs" style="left:1806px;top:800px" width="14" height="12"><path d="M1 2h12M1 5h12M1 8h12M1 11h12" stroke="#333" stroke-width="1"/></svg>
<svg class="abs" style="left:1830px;top:799px" width="14" height="13"><rect x="1" y="1" width="11" height="8" fill="none" stroke="#333" stroke-width="1"/><path d="M1 11.5h12" stroke="#333" stroke-width="1"/></svg>
<!-- OpenShot window -->
<div id="osshadow" class="abs" style="left:393px;top:42px;width:1094px;height:826px;border-radius:8px;box-shadow:0 14px 40px rgba(0,0,0,.36),0 0 8px rgba(0,0,0,.2)"></div>
<div id="os" class="abs" style="left:393px;top:42px;width:1094px;height:826px;background:#1b2230;border-radius:8px;overflow:hidden">
  <div class="abs" style="left:0;top:0;width:1094px;height:30px;background:#f3f3f3"></div>
  <div class="abs" style="left:0;top:30px;width:1094px;height:64px;background:#293140"></div>
</div>
<div class="abs" style="left:393px;top:42px;width:1094px;height:826px;border-radius:8px;border:1px solid rgba(0,0,0,.25);border-top-color:#bdbdbd;pointer-events:none"></div>
<!-- title bar -->
<svg class="abs" style="left:400px;top:47px" width="18" height="18" viewBox="0 0 48 48"><defs><radialGradient id="osd2" cx="0.68" cy="0.3" r="0.8"><stop offset="0" stop-color="#ffffff"/><stop offset=".55" stop-color="#e2e5e8"/><stop offset="1" stop-color="#8c939a"/></radialGradient></defs><circle cx="24" cy="24" r="22" fill="url(#osd2)" stroke="#7a7f85" stroke-width="0.8"/><path d="M4 21Q7 7 23 3.5Q14 10 17 17Q19 21.5 27 23L5 27Z" fill="#86cdf2"/><path d="M5 27L27 23Q38 26 35 34Q31 41 21 46Q11 43 7 35Z" fill="#2c6fd2"/><path d="M1.5 17Q24 25 47 29L45 40Q24 35 3 29Z" fill="#0e0e10"/><path d="M7 21.5l3.5 1-.8 3.2-3.5-1zM15 24l3.5 1-.8 3.2-3.5-1zM23 26.3l3.5.9-.7 3.2-3.5-.9zM31 28l3.5.8-.6 3.2-3.5-.8zM39 29.4l3.5.7-.5 3.2-3.5-.7z" fill="#2d5f9e"/></svg>
<div class="abs" style="left:423px;top:50px;font-size:11.9px;line-height:14px;color:#1a1a1a;white-space:nowrap">* Untitled Project [PAL SD SQ 576p 25 fps] - OpenShot Video Editor</div>
<div class="abs" style="left:1367px;top:56px;width:12px;height:1px;background:#222"></div>
<div class="abs" style="left:1412px;top:50px;width:11px;height:11px;border:1px solid #222"></div>
<svg class="abs" style="left:1457px;top:50px" width="13" height="13"><path d="M0.5 0.5L12.5 12.5M12.5 0.5L0.5 12.5" stroke="#222" stroke-width="1.2"/></svg>
<!-- menu bar -->
<div class="abs" style="left:399px;top:72px;width:26px;height:21px;background:#2f6eb5"></div>
<div class="abs mtx" style="left:403px;top:76px;color:#0b0b14"><u>F</u>ile</div>
<div class="abs mtx" style="left:435px;top:76px"><u>E</u>dit</div>
<div class="abs mtx" style="left:469px;top:76px">Title</div>
<div class="abs mtx" style="left:505px;top:76px">View</div>
<div class="abs mtx" style="left:544px;top:76px">Help</div>
<!-- toolbar -->
<div class="abs" style="left:395px;top:104px;width:4px;height:22px;background-image:radial-gradient(circle,#5a6270 0.8px,transparent 1px);background-size:2px 3px"></div>
<svg class="abs" style="left:638px;top:105px" width="18" height="18"><rect x="1" y="1" width="16" height="16" rx="4" fill="none" stroke="#8fb2e0" stroke-width="1.3"/><path d="M9 5v8M5 9h8" stroke="#8fb2e0" stroke-width="1.6"/></svg>
<div class="abs tbt" style="left:660px;top:109px">Import Files</div>
<svg class="abs" style="left:748px;top:105px" width="16" height="18"><path d="M3 1.2H13Q15.3 1.2 15.3 3.5V6Q13.6 6.6 13.6 9Q13.6 11.4 15.3 12V14.5Q15.3 16.8 13 16.8H3Q0.7 16.8 0.7 14.5V12Q2.4 11.4 2.4 9Q2.4 6.6 0.7 6V3.5Q0.7 1.2 3 1.2Z" fill="none" stroke="#8fb2e0" stroke-width="1.3"/><rect x="4.6" y="4.8" width="6.8" height="3.2" rx="1.6" fill="none" stroke="#8fb2e0" stroke-width="1.1"/><rect x="4.6" y="10" width="6.8" height="3.2" rx="1.6" fill="none" stroke="#8fb2e0" stroke-width="1.1"/></svg>
<div class="abs tbt" style="left:768px;top:109px">Choose Profile</div>
<svg class="abs" style="left:1274px;top:105px" width="18" height="18"><path d="M3 1.5h9l4.5 4.5v9a1.5 1.5 0 0 1-1.5 1.5H3A1.5 1.5 0 0 1 1.5 15V3A1.5 1.5 0 0 1 3 1.5z" fill="none" stroke="#8fb2e0" stroke-width="1.3"/><path d="M5 1.5v4h6v-4M4.5 16.5v-5h9v5" fill="none" stroke="#8fb2e0" stroke-width="1.3"/></svg>
<div class="abs tbt" style="left:1295px;top:109px">Save Project</div>
<div class="abs" style="left:1374px;top:93px;width:113px;height:43px;background:#007bff"></div>
<svg class="abs" style="left:1380px;top:100px" width="28" height="28"><path d="M10.5 10.8Q6.2 11.2 6.2 15V17Q6.2 21 10.2 21H17.7Q21.6 21 21.6 17V15Q21.6 11.2 17.4 10.8" fill="none" stroke="#eaf2ff" stroke-width="1.3"/><path d="M14 7.2V17.3M11.3 14.4L14 17.2L16.7 14.4" fill="none" stroke="#dce9ff" stroke-width="1.5"/></svg>
<div class="abs tbt" style="left:1406px;top:109px;color:#eef4ff">Export Video</div>

<!-- left dock panel -->
<div class="abs" style="left:633px;top:153px;font-size:11px;color:#6a7890">is</div>
<svg class="abs" style="left:790px;top:171px" width="12" height="12"><rect x="1" y="4" width="7" height="7" rx="1.5" fill="none" stroke="#4e5f78" stroke-width="1.2"/><path d="M4 4V2.5A1.5 1.5 0 0 1 5.5 1h4A1.5 1.5 0 0 1 11 2.5v4A1.5 1.5 0 0 1 9.5 8H8" fill="none" stroke="#4e5f78" stroke-width="1.2"/></svg>
<svg class="abs" style="left:813px;top:172px" width="10" height="10"><path d="M1 1L9 9M9 1L1 9" stroke="#4e5f78" stroke-width="1.2"/></svg>
<div class="abs" style="left:409px;top:188px;width:417px;height:397px;background:#161a24;border-radius:4px"></div>
<div class="abs" style="left:421px;top:199px;width:394px;height:30px;background:#1b2230;border-radius:4px"></div>
<div class="abs" style="left:632px;top:238px;width:97px;height:64px;background:#000;border-radius:8px"></div>
<div class="abs" style="left:634px;top:238px;width:87px;height:64px;background:#0e0f0e;border-radius:8px 0 0 8px"></div>
<div class="abs" style="left:669px;top:266.5px;font-size:7px;font-weight:bold;color:#c2a316">Final</div>
<div class="abs" style="left:648px;top:308px;font-size:10.8px;color:#f2f2f2;white-space:nowrap">legendas.png</div>
<div class="abs" style="left:845px;top:354px;width:2px;height:18px;background-image:linear-gradient(#8a929e 50%,transparent 50%);background-size:2px 3px"></div>

<!-- video preview -->
<div class="abs" style="left:867px;top:155px;font-size:12.5px;font-weight:bold;color:#8dbcf2;white-space:nowrap">Video Preview</div>
<svg class="abs" style="left:1435px;top:154px" width="12" height="12"><rect x="1" y="4" width="7" height="7" rx="1.5" fill="none" stroke="#4e5f78" stroke-width="1.2"/><path d="M4 4V2.5A1.5 1.5 0 0 1 5.5 1h4A1.5 1.5 0 0 1 11 2.5v4A1.5 1.5 0 0 1 9.5 8H8" fill="none" stroke="#4e5f78" stroke-width="1.2"/></svg>
<svg class="abs" style="left:1458px;top:155px" width="10" height="10"><path d="M1 1L9 9M9 1L1 9" stroke="#4e5f78" stroke-width="1.2"/></svg>
<div class="abs" style="left:864px;top:184px;width:607px;height:401px;background:#161a24;border-radius:4px"></div>
<div class="abs" style="left:942px;top:193px;width:451px;height:338px;background:#000"></div>
<svg class="abs" style="left:1080px;top:540px" width="180" height="32" viewBox="0 0 180 32" fill="#fff">
  <rect x="7" y="8" width="2" height="16" rx="1"/><path d="M9.5 16L21.5 8.3Q22.5 8 22.5 9.2V22.8Q22.5 24 21.5 23.7Z"/>
  <path d="M41.5 16L50 11V21ZM50 16L59 11V21Z"/>
  <path d="M79 6.5Q79 5.5 80 6L96 15.3Q97 16 96 16.7L80 26Q79 26.5 79 25.5Z"/>
  <path d="M115 11L123.5 16L115 21ZM123.5 11L132 16L123.5 21Z"/>
  <path d="M152 9.2Q152 8 153 8.3L165 16L153 23.7Q152 24 152 22.8Z"/><rect x="165" y="8" width="2" height="16" rx="1"/>
</svg>
<div class="abs" style="left:935px;top:586px;width:14px;height:2px;background-image:linear-gradient(90deg,#7d8591 50%,transparent 50%);background-size:2px 2px"></div>

<!-- timeline toolbar -->
<div class="abs" style="left:408px;top:601px;width:89px;height:35px;background:#161a24;border-radius:4px"></div>
<svg class="abs" style="left:418px;top:612px" width="12" height="12"><circle cx="6" cy="6" r="5" fill="none" stroke="#8fb2e0" stroke-width="1.2"/><circle cx="6" cy="6" r="2.2" fill="#8fb2e0"/></svg>
<div class="abs tbt2" style="left:432px;top:612px">Add Track</div>
<div class="abs" style="left:507px;top:603px;width:62px;height:31px;background:#161a24;border-radius:4px"></div>
<svg class="abs" style="left:515px;top:611px" width="14" height="14"><path d="M4 2L1.5 4.5L4 7M1.5 4.5H8a3.5 3.5 0 0 1 0 7H4.5" fill="none" stroke="#8fb2e0" stroke-width="1.2"/></svg>
<svg class="abs" style="left:546px;top:611px" width="14" height="14"><path d="M10 2L12.5 4.5L10 7M12.5 4.5H6a3.5 3.5 0 0 0 0 7h3.5" fill="none" stroke="#8fb2e0" stroke-width="1.2"/></svg>
<div class="abs" style="left:579px;top:603px;width:62px;height:31px;background:#161a24;border-radius:4px"></div>
<div class="abs" style="left:579px;top:603px;width:31px;height:31px;background:#283040;border-radius:4px 0 0 4px"></div>
<svg class="abs" style="left:587px;top:610px" width="14" height="14"><path d="M2.5 12.5V7a4.5 4.5 0 0 1 9 0v5.5M5 12.5V7a2 2 0 0 1 4 0v5.5" fill="none" stroke="#8fb2e0" stroke-width="1.3"/></svg>
<svg class="abs" style="left:618px;top:610px" width="14" height="14"><path d="M3 1L10 10M11 1L4 10" stroke="#8fb2e0" stroke-width="1.2"/><circle cx="3" cy="11" r="2" fill="none" stroke="#8fb2e0" stroke-width="1.1"/><circle cx="11" cy="11" r="2" fill="none" stroke="#8fb2e0" stroke-width="1.1"/></svg>
<div class="abs" style="left:651px;top:601px;width:98px;height:35px;background:#161a24;border-radius:4px 0 0 4px"></div>
<div class="abs" style="left:749px;top:603px;width:62px;height:31px;background:#161a24;border-radius:0 4px 4px 0"></div>
<svg class="abs" style="left:661px;top:611px" width="12" height="14"><path d="M1 2.5L6 1l5 1.5v5Q11 11 6 13Q1 11 1 7.5z" fill="none" stroke="#8fb2e0" stroke-width="1.2"/><path d="M6 4.5v5M3.5 7h5" stroke="#8fb2e0" stroke-width="1.2"/></svg>
<div class="abs tbt2" style="left:675px;top:612px">Add Marker</div>
<svg class="abs" style="left:757px;top:610px" width="14" height="16"><path d="M1.5 3L7 1.2L12.5 3v6Q12.5 12.5 7 14.8Q1.5 12.5 1.5 9z" fill="none" stroke="#8fb2e0" stroke-width="1.3"/><path d="M9.5 8H4.5M6.5 6L4.5 8L6.5 10" fill="none" stroke="#8fb2e0" stroke-width="1.2"/></svg>
<svg class="abs" style="left:788px;top:610px" width="14" height="16"><path d="M1.5 3L7 1.2L12.5 3v6Q12.5 12.5 7 14.8Q1.5 12.5 1.5 9z" fill="none" stroke="#8fb2e0" stroke-width="1.3"/><path d="M4.5 8H9.5M7.5 6L9.5 8L7.5 10" fill="none" stroke="#8fb2e0" stroke-width="1.2"/></svg>
<div class="abs" style="left:821px;top:603px;width:31px;height:31px;background:#161a24;border-radius:4px"></div>
<svg class="abs" style="left:829px;top:611px" width="14" height="14"><path d="M7 2.5V11.5M1 7H5.5M9 7H13M3.5 4.5L6 7L3.5 9.5M10.5 4.5L8 7L10.5 9.5" fill="none" stroke="#8fb2e0" stroke-width="1.2"/></svg>
<!-- zoom slider -->
<div class="abs" style="left:862px;top:601px;width:609px;height:39px;background:#1b1b1b"></div>
<div class="abs" style="left:862px;top:601px;width:288px;height:39px;background:#283a51;border:1px solid #3b5d84;border-radius:5px"></div>
<div class="abs" style="left:862px;top:601px;width:1px;height:39px;background:#d6a21a"></div>
<div class="abs" style="left:862px;top:609px;width:7px;height:22px;overflow:hidden"><div class="abs" style="left:-6.5px;top:0;width:13px;height:22px;background:#4a80bd;border-radius:50%"></div></div>
<div class="abs" style="left:1144px;top:609px;width:13px;height:22px;background:#4a80bd;border-radius:50%"></div>

<!-- ruler -->
<div class="abs" style="left:393px;top:646px;width:1094px;height:43px;background:#151a24"></div>
<div class="abs" style="left:409px;top:657.5px;font-size:16.4px;color:#b9b4aa;white-space:nowrap">00:00:00,01</div>
<svg class="abs" style="left:393px;top:646px;overflow:hidden" width="1086" height="43" id="ruler"><rect x="140.4" y="15.7" width="1.4" height="20.3" fill="#c4c4c4"/><rect x="193.7" y="21.8" width="1.4" height="14.2" fill="#c4c4c4"/><rect x="247.0" y="15.7" width="1.4" height="20.3" fill="#c4c4c4"/><rect x="300.3" y="21.8" width="1.4" height="14.2" fill="#c4c4c4"/><rect x="353.6" y="15.7" width="1.4" height="20.3" fill="#c4c4c4"/><rect x="406.9" y="21.8" width="1.4" height="14.2" fill="#c4c4c4"/><rect x="460.2" y="15.7" width="1.4" height="20.3" fill="#c4c4c4"/><rect x="513.5" y="21.8" width="1.4" height="14.2" fill="#c4c4c4"/><rect x="566.8" y="15.7" width="1.4" height="20.3" fill="#c4c4c4"/><rect x="620.1" y="21.8" width="1.4" height="14.2" fill="#c4c4c4"/><rect x="673.4" y="15.7" width="1.4" height="20.3" fill="#c4c4c4"/><rect x="726.7" y="21.8" width="1.4" height="14.2" fill="#c4c4c4"/><rect x="780.0" y="15.7" width="1.4" height="20.3" fill="#c4c4c4"/><rect x="833.3" y="21.8" width="1.4" height="14.2" fill="#c4c4c4"/><rect x="886.6" y="15.7" width="1.4" height="20.3" fill="#c4c4c4"/><rect x="939.9" y="21.8" width="1.4" height="14.2" fill="#c4c4c4"/><rect x="993.2" y="15.7" width="1.4" height="20.3" fill="#c4c4c4"/><rect x="1046.5" y="21.8" width="1.4" height="14.2" fill="#c4c4c4"/><text x="140.4" y="12.2" font-size="11" fill="#cdc8bd">0:00</text><text x="247.7" y="12.2" font-size="11" fill="#cdc8bd" text-anchor="middle">00:00:16</text><text x="354.3" y="12.2" font-size="11" fill="#cdc8bd" text-anchor="middle">00:00:32</text><text x="460.9" y="12.2" font-size="11" fill="#cdc8bd" text-anchor="middle">00:00:48</text><text x="567.5" y="12.2" font-size="11" fill="#cdc8bd" text-anchor="middle">00:01:04</text><text x="674.1" y="12.2" font-size="11" fill="#cdc8bd" text-anchor="middle">00:01:20</text><text x="780.7" y="12.2" font-size="11" fill="#cdc8bd" text-anchor="middle">00:01:36</text><text x="887.3" y="12.2" font-size="11" fill="#cdc8bd" text-anchor="middle">00:01:52</text><text x="993.9" y="12.2" font-size="11" fill="#cdc8bd" text-anchor="middle">00:02:08</text><text x="1075.5" y="12.2" font-size="11" fill="#cdc8bd">0</text></svg>

<!-- tracks -->
<div class="abs" style="left:393px;top:689px;width:1094px;height:172px;background:#10141c"></div>
<div class="abs trh" style="top:689px"></div><div class="abs trc" style="top:689px"></div>
<div class="abs trh" style="top:747px"></div><div class="abs trc" style="top:747px"></div>
<div class="abs trh" style="top:805px"></div><div class="abs trc" style="top:805px"></div>
<div class="abs trb" style="top:689px"></div><div class="abs trb" style="top:747px"></div><div class="abs trb" style="top:805px"></div>
<div class="abs trt" style="top:697px">Track 5</div>
<div class="abs trt" style="top:755px">Track 4</div>
<div class="abs trt" style="top:813px">Track 3</div>
<svg class="abs" style="left:410px;top:697px" width="14" height="14"><path d="M0.8 1.5H4.2L6.9 8.2L9.6 1.5H13L7.2 13.5H6.6Z" fill="#4d5057"/></svg>
<svg class="abs" style="left:410px;top:755px" width="14" height="14"><path d="M0.8 1.5H4.2L6.9 8.2L9.6 1.5H13L7.2 13.5H6.6Z" fill="#4d5057"/></svg>
<svg class="abs" style="left:410px;top:813px" width="14" height="14"><path d="M0.8 1.5H4.2L6.9 8.2L9.6 1.5H13L7.2 13.5H6.6Z" fill="#4d5057"/></svg>
<div class="abs" style="left:1479px;top:689px;width:8px;height:172px;background:#151a24"></div>
<div class="abs" style="left:1480px;top:690px;width:7px;height:90px;background:#2c3a4e;border-radius:4px"></div>
<div class="abs" style="left:393px;top:854px;width:1086px;height:7px;background:#151a24"></div>
<div class="abs" style="left:533px;top:854px;width:444px;height:7px;background:#2c3a4e;border-radius:3px"></div>
<div class="abs" style="left:533px;top:667px;width:1px;height:187px;background:#f5b90f"></div>
<svg class="abs" style="left:532px;top:665px" width="9" height="20"><path d="M1 1H5.5Q7.5 1 7.5 3V12L3 16H1Z" fill="#f7bd12"/></svg>

<div class="abs" style="left:935px;top:863px;width:14px;height:2px;background-image:linear-gradient(90deg,#7d8591 50%,transparent 50%);background-size:2px 2px"></div>
<div class="abs" style="left:399px;top:93px;width:233px;height:354px;background:#161a24;border:1.5px solid #1381ff;border-radius:0 0 4px 4px;box-shadow:2px 3px 5px rgba(0,0,0,.45)"></div>
<div class="abs" style="left:408px;top:256px;width:215px;height:28px;background:#1b2332;border-radius:2px"></div>
<div class="abs mt" style="top:108px">New Project</div><div class="abs mk" style="top:108px">Ctrl+N</div>
<div class="abs mt" style="top:136px">Open Project...</div><div class="abs mk" style="top:136px">Ctrl+O</div>
<div class="abs mt" style="top:164px">Recent Projects</div>
<div class="abs mt" style="top:200px">Save Project</div><div class="abs mk" style="top:200px">Ctrl+S</div>
<div class="abs mt" style="top:228px">Save Project As...</div><div class="abs mk" style="top:228px">Ctrl+Shift+S</div>
<div class="abs mt" style="top:264px;color:#f0f0f0">Import Files...</div><div class="abs mk" style="top:264px;color:#eef2f8">Ctrl+I</div>
<div class="abs mt" style="top:292px">Choose Profile</div><div class="abs mk" style="top:292px">Ctrl+Alt+P</div>
<div class="abs mt" style="top:320px">Save Current Frame</div><div class="abs mk" style="top:320px">Shift+E</div>
<div class="abs mt" style="top:356px">Import Project</div>
<div class="abs mt" style="top:384px">Export Project</div>
<div class="abs mt" style="top:420px"><u>Q</u>uit</div><div class="abs mk" style="top:420px">Ctrl+Q</div>
<svg class="abs" style="left:614px;top:166px" width="5" height="9"><path d="M0.5 0.5L4.5 4.5L0.5 8.5Z" fill="#8a9bb5"/></svg>
<svg class="abs" style="left:614px;top:358px" width="5" height="9"><path d="M0.5 0.5L4.5 4.5L0.5 8.5Z" fill="#8a9bb5"/></svg>
<svg class="abs" style="left:614px;top:386px" width="5" height="9"><path d="M0.5 0.5L4.5 4.5L0.5 8.5Z" fill="#8a9bb5"/></svg>
<!-- icons -->
<svg class="abs" style="left:408px;top:106px" width="16" height="16"><path d="M2.5 2.5Q2.5 1 4 1H6.5L8 2.5H12.5Q14.5 2.5 14.5 4.5V12.5Q14.5 14.5 12.5 14.5H4Q2.5 14.5 2 13Q1.5 12 1.5 10V4Q1.5 2.5 2.5 2.5Z" fill="none" stroke="#7790b4" stroke-width="1.1"/><path d="M8 6.8v3.4M6.3 8.5h3.4" stroke="#9cc4f4" stroke-width="1.2"/></svg>
<svg class="abs" style="left:408px;top:134px" width="16" height="16"><path d="M2.5 2.5Q2.5 1 4 1H6.5L8 2.5H12.5Q14.5 2.5 14.5 4.5V12.5Q14.5 14.5 12.5 14.5H4Q2.5 14.5 2 13Q1.5 12 1.5 10V4Q1.5 2.5 2.5 2.5Z" fill="none" stroke="#7790b4" stroke-width="1.1"/><path d="M5 9.5h6" stroke="#7790b4" stroke-width="1.2"/></svg>
<svg class="abs" style="left:409px;top:199px" width="15" height="15"><path d="M2 1h8.5L13.5 4v8.5q0 1.5-1.5 1.5H2q-1.5 0-1.5-1.5V2.5Q.5 1 2 1z" fill="none" stroke="#7790b4" stroke-width="1.1"/><path d="M3.8 1v3.2h5.4V1M3 14V9h8v5" fill="none" stroke="#7790b4" stroke-width="1.1"/></svg>
<svg class="abs" style="left:408px;top:226px" width="16" height="16"><rect x="0.5" y="1" width="15" height="13" fill="#d8dcd8"/><rect x="0.5" y="1" width="15" height="3" fill="#79b040"/><rect x="2" y="1.8" width="5" height="1.3" fill="#e8f0e0"/><rect x="8.5" y="1.8" width="5" height="1.3" fill="#e8f0e0"/><path d="M4 5.5h8L8 10z" fill="#6fb832"/><rect x="0.5" y="12" width="15" height="2.5" fill="#5a5e5a"/></svg>
<svg class="abs" style="left:409px;top:263px" width="15" height="15"><rect x=".8" y=".8" width="13.4" height="13.4" rx="3" fill="none" stroke="#7790b4" stroke-width="1.1"/><path d="M7.5 4.5v6M4.5 7.5h6" stroke="#9cc4f4" stroke-width="1.3"/></svg>
<svg class="abs" style="left:409px;top:291px" width="15" height="16"><path d="M2.8 1H12.2Q14.2 1 14.2 3V5.3Q12.7 5.9 12.7 8Q12.7 10.1 14.2 10.7V13Q14.2 15 12.2 15H2.8Q.8 15 .8 13V10.7Q2.3 10.1 2.3 8Q2.3 5.9 .8 5.3V3Q.8 1 2.8 1Z" fill="none" stroke="#7790b4" stroke-width="1.1"/><rect x="4.3" y="4.2" width="6.4" height="2.8" rx="1.4" fill="none" stroke="#7790b4" stroke-width="1"/><rect x="4.3" y="8.8" width="6.4" height="2.8" rx="1.4" fill="none" stroke="#7790b4" stroke-width="1"/></svg>
<svg class="abs" style="left:408px;top:319px" width="16" height="14"><path d="M1.5 3.5h3l1.3-2h4.4l1.3 2h3q1 0 1 1V12q0 1-1 1h-13q-1 0-1-1V4.5q0-1 1-1z" fill="#727272"/><circle cx="8" cy="8" r="2.8" fill="#161a24"/></svg>
<svg class="abs" style="left:408px;top:355px" width="16" height="16"><rect x="0.5" y="1" width="15" height="14" fill="#f4f4f4"/><rect x="0.5" y="1" width="15" height="2" fill="#ddd"/><rect x="2.5" y="5" width="2.5" height="2" fill="#2b7de0"/><rect x="2.5" y="9" width="2.5" height="2" fill="#2b7de0"/><path d="M6 6h7M6 8h5M6 10h7M6 12h5" stroke="#777" stroke-width=".9"/></svg>
<svg class="abs" style="left:408px;top:382px" width="16" height="16"><defs><radialGradient id="rb" cx=".4" cy=".35" r=".7"><stop offset="0" stop-color="#ff6a5c"/><stop offset=".7" stop-color="#e0201a"/><stop offset="1" stop-color="#a8120e"/></radialGradient></defs><circle cx="8" cy="8" r="7.5" fill="url(#rb)"/></svg>
<svg class="abs" style="left:408px;top:418px" width="16" height="16"><rect x="0.5" y="0.5" width="15" height="15" rx="1.5" fill="#e03a2e"/><path d="M5.2 5.2A4 4 0 1 0 10.8 5.2" fill="none" stroke="#fff" stroke-width="1.5"/><path d="M8 3v5" stroke="#fff" stroke-width="1.5"/></svg>
<div class="abs" style="left:0;top:1032px;width:1919px;height:47px;background:#efefef;border-top:1px solid #c6c6c6"></div>
<svg class="abs" style="left:20px;top:1045px" width="21" height="21"><defs><linearGradient id="sun" x1="0" y1="0" x2="1" y2="1"><stop offset="0" stop-color="#f5c022"/><stop offset="1" stop-color="#ec5e0c"/></linearGradient></defs><circle cx="10.5" cy="10.5" r="10" fill="url(#sun)"/></svg>
<div class="abs" style="left:50.5px;top:1042px;font-size:11px;line-height:13px;color:#1b1b1b">13°C</div>
<div class="abs" style="left:50.5px;top:1057px;font-size:11.5px;line-height:13px;color:#5a5a5a">Sol</div>
<!-- start -->
<svg class="abs" style="left:683px;top:1045px" width="23" height="23"><defs><linearGradient id="win" x1="0" y1="0" x2="1" y2="1"><stop offset="0" stop-color="#3ccbf4"/><stop offset="1" stop-color="#0a6cd4"/></linearGradient></defs><rect x="0" y="0" width="10.8" height="10.8" rx="1" fill="url(#win)"/><rect x="12" y="0" width="10.8" height="10.8" rx="1" fill="url(#win)"/><rect x="0" y="12" width="10.8" height="10.8" rx="1" fill="url(#win)"/><rect x="12" y="12" width="10.8" height="10.8" rx="1" fill="url(#win)"/></svg>
<div class="abs" style="left:719.5px;top:1040.5px;width:218px;height:31px;border-radius:16px;background:#fafafa;border:1px solid #dedede"></div>
<svg class="abs" style="left:730px;top:1048px" width="16" height="16"><circle cx="6.8" cy="6.8" r="5.3" fill="none" stroke="#1c1c1c" stroke-width="1.6"/><path d="M10.8 10.8L14.5 14.5" stroke="#1c1c1c" stroke-width="1.8" stroke-linecap="round"/></svg>
<div class="abs" style="left:755.5px;top:1048px;font-size:13px;line-height:16px;color:#5f5f5f">Search</div>
<!-- task view -->
<div class="abs" style="left:957px;top:1045px;width:18px;height:15px;background:linear-gradient(135deg,#fdfdfd,#d8d8d8);border-radius:1px"></div>
<div class="abs" style="left:951px;top:1051px;width:18px;height:16px;background:linear-gradient(135deg,#3a3a3a,#121212);border-radius:1px"></div>
<div class="abs" style="left:957px;top:1051px;width:12px;height:9px;background:linear-gradient(135deg,#c6c6c6,#9a9a9a)"></div>
<!-- explorer -->
<svg class="abs" style="left:995px;top:1045px" width="24" height="22"><path d="M0 2q0-1.5 1.5-1.5h6l2 2.5H22.5q1.5 0 1.5 1.5V5H0z" fill="#e8a413"/><rect x="0" y="4" width="24" height="17.5" rx="1.5" fill="#ffd04a"/><rect x="5" y="15" width="14" height="6.5" rx="1.5" fill="#1d78d2"/><rect x="7" y="16.5" width="10" height="1.3" fill="#4aa0f0"/></svg>
<div class="abs" style="left:1004px;top:1073px;width:6px;height:3px;border-radius:2px;background:#6f6f6f"></div>
<!-- edge -->
<svg class="abs" style="left:1039px;top:1044px" width="24" height="24" viewBox="0 0 24 24"><defs><linearGradient id="edg1" x1="0" y1="1" x2="1" y2="0"><stop offset="0" stop-color="#0c59a4"/><stop offset="1" stop-color="#1ea3e6"/></linearGradient><linearGradient id="edg2" x1="0" y1="0" x2="1" y2="1"><stop offset="0" stop-color="#35c1f1"/><stop offset="1" stop-color="#66eb6e"/></linearGradient></defs><path d="M12 0.5C5 0.5 .5 6 .5 12c0 7 6 11.5 12 11.5 3.5 0 7-1.7 9-4.5-3 1.5-7.5 1.2-9.5-1.5-1.5-2-1-4 .5-5 1.3-1 3.5-.8 4.5.5l.3.6h6.2c.2-.7.3-1.5.3-2.3C23.5 5 18.5.5 12 .5z" fill="url(#edg1)"/><path d="M2 7.5C4 3 8 .8 12 .8c6.5 0 11.3 4.5 11.3 10.5 0 .8-.1 1.6-.3 2.3h-6.2c-.5-2.5-3.5-4-6.5-3-3 1-4.5 4-4 6.5C3.2 15 1.5 11 2 7.5z" fill="url(#edg2)"/></svg>
<!-- store -->
<svg class="abs" style="left:1083px;top:1045px" width="23" height="23"><path d="M6.5 5V3.5Q6.5 1 9 1h5q2.5 0 2.5 2.5V5" fill="none" stroke="#1aa6ea" stroke-width="1.8"/><rect x="0.5" y="4.5" width="22" height="18" rx="3" fill="#134d93"/><rect x="7" y="9" width="4" height="4" fill="#f25022"/><rect x="12" y="9" width="4" height="4" fill="#7fba00"/><rect x="7" y="14" width="4" height="4" fill="#00a4ef"/><rect x="12" y="14" width="4" height="4" fill="#ffb900"/></svg>
<!-- outlook -->
<svg class="abs" style="left:1127px;top:1045px" width="24" height="22"><path d="M8 4L16 0.5L24 5V20Q24 21.5 22.5 21.5H9.5Q8 21.5 8 20Z" fill="#0a7ad8"/><path d="M8 10L24 5V20Q24 21.5 22.5 21.5H9.5Q8 21.5 8 20Z" fill="#3cc3f7"/><rect x="0" y="5" width="12" height="12" rx="1.5" fill="#0f5fbf"/><ellipse cx="6" cy="11" rx="3.2" ry="3.8" fill="none" stroke="#fff" stroke-width="1.6"/></svg>
<!-- 3ds max -->
<svg class="abs" style="left:1172px;top:1044px" width="23" height="24"><path d="M0 2Q0 0 2 0H19V3H22V24H3V21H0Z" fill="#3aa0c8"/><rect x="3" y="17" width="19" height="7" fill="#255f82"/><text x="11.5" y="14" font-size="13" font-weight="bold" fill="#fff" text-anchor="middle">3</text><text x="12.5" y="22.7" font-size="5" font-weight="bold" fill="#e0f0f8" text-anchor="middle">MAX</text></svg>
<div class="abs" style="left:1181px;top:1073px;width:6px;height:3px;border-radius:2px;background:#6f6f6f"></div>
<!-- openshot -->
<div class="abs" style="left:1208px;top:1037px;width:38px;height:38px;border-radius:5px;background:#fbfbfb;border:1px solid #e6e6e6"></div>
<svg class="abs" style="left:1215px;top:1045px" width="23" height="23" viewBox="0 0 48 48"><defs><radialGradient id="osd3" cx="0.68" cy="0.3" r="0.8"><stop offset="0" stop-color="#ffffff"/><stop offset=".55" stop-color="#e2e5e8"/><stop offset="1" stop-color="#8c939a"/></radialGradient></defs><circle cx="24" cy="24" r="22" fill="url(#osd3)" stroke="#7a7f85" stroke-width="0.8"/><path d="M4 21Q7 7 23 3.5Q14 10 17 17Q19 21.5 27 23L5 27Z" fill="#86cdf2"/><path d="M5 27L27 23Q38 26 35 34Q31 41 21 46Q11 43 7 35Z" fill="#2c6fd2"/><path d="M1.5 17Q24 25 47 29L45 40Q24 35 3 29Z" fill="#0e0e10"/><path d="M7 21.5l3.5 1-.8 3.2-3.5-1zM15 24l3.5 1-.8 3.2-3.5-1zM23 26.3l3.5.9-.7 3.2-3.5-.9zM31 28l3.5.8-.6 3.2-3.5-.8zM39 29.4l3.5.7-.5 3.2-3.5-.7z" fill="#2d5f9e"/></svg>
<div class="abs" style="left:1219px;top:1072px;width:16px;height:3px;border-radius:2px;background:#005fb8"></div>
<!-- tray -->
<svg class="abs" style="left:1676px;top:1051px" width="12" height="8"><path d="M1 7L6 2L11 7" fill="none" stroke="#1a1a1a" stroke-width="1.3"/></svg>
<svg class="abs" style="left:1705px;top:1048px" width="18" height="16"><path d="M3.5 13.5Q.5 13.5 .5 10.5Q.5 8 3 7.5Q3.5 3.5 8 3.5Q11.5 3.5 12.5 6.5Q16.5 6.5 16.5 10Q16.5 13.5 13 13.5Z" fill="#c8c8c8" stroke="#2a2a2a" stroke-width="1"/><path d="M2 1.5L15.5 15" stroke="#2a2a2a" stroke-width="1.2"/></svg>
<div class="abs" style="left:1740px;top:1042px;width:24px;text-align:center;font-size:11px;line-height:13px;color:#1b1b1b">ENG</div>
<div class="abs" style="left:1740px;top:1058px;width:24px;text-align:center;font-size:11px;line-height:13px;color:#1b1b1b">PT</div>
<svg class="abs" style="left:1781px;top:1047px" width="19" height="18"><rect x="0.6" y="1.6" width="12" height="10" fill="none" stroke="#1c1c1c" stroke-width="1.1"/><path d="M4 15h7M6.5 12v3" stroke="#1c1c1c" stroke-width="1.1"/><rect x="13.5" y="0.6" width="3.5" height="4.5" rx="1.5" fill="none" stroke="#1c1c1c" stroke-width="1"/><path d="M15.2 5v10.5" stroke="#1c1c1c" stroke-width="1.1"/></svg>
<svg class="abs" style="left:1805px;top:1049px" width="17" height="13"><path d="M1 4H3.5L7 1V12L3.5 9H1Z" fill="none" stroke="#1c1c1c" stroke-width="1"/><path d="M10 4.5L15 9.5M15 4.5L10 9.5" stroke="#1c1c1c" stroke-width="1"/></svg>
<div class="abs" style="left:1830px;top:1041.5px;width:70px;text-align:right;font-size:11.8px;line-height:14px;color:#1b1b1b">14:53</div>
<div class="abs" style="left:1830px;top:1057px;width:70px;text-align:right;font-size:11.8px;line-height:14px;color:#1b1b1b">20/11/2025</div>

</body></html>
